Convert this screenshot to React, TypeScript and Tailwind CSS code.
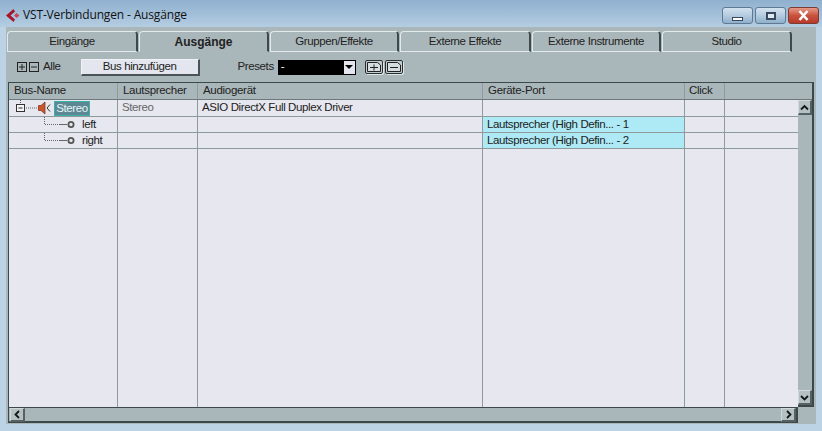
const tabs = [
  { label: 'Eingänge', w: 'w-[131px]' },
  { label: 'Ausgänge', w: 'w-[130px]', active: true },
  { label: 'Gruppen/Effekte', w: 'w-[129px]' },
  { label: 'Externe Effekte', w: 'w-[131px]' },
  { label: 'Externe Instrumente', w: 'w-[129px]' },
  { label: 'Studio', w: 'w-[130px]' },
];

const cell = 'h-full shrink-0 border-r border-[#8f9a9c] px-1 flex items-center overflow-hidden whitespace-nowrap';

function Row({ h, first, name, port, nameEl }: { h: string; first?: string; name?: string; port?: string; nameEl?: React.ReactNode }) {
  return (
    <div className={`flex shrink-0 border-b border-[#8f9a9c] ${h}`}>
      <div className={`${cell} w-[109px] !px-0`}>{nameEl}</div>
      <div className={`${cell} w-[80px] text-[#666]`}>{first}</div>
      <div className={`${cell} w-[285px]`}>{name}</div>
      <div className={`${cell} w-[202px] !px-0 ${port ? 'bg-[#aeeaf6]' : ''}`}>
        {port && <span className="pl-1">{port}</span>}
      </div>
      <div className={`${cell} w-[40px]`} />
      <div className="flex-1" />
    </div>
  );
}

function ChildName({ label }: { label: string }) {
  return (
    <div className="relative h-full w-full">
      <svg width="70" height="16" className="absolute left-0 top-0">
        <path d="M35.5 0V7.5H51" stroke="#666" strokeDasharray="1 1" fill="none" />
        <path d="M51 7.5H58" stroke="#666" fill="none" />
        <circle cx="62" cy="7.5" r="2.6" fill="none" stroke="#555" strokeWidth="1.8" />
      </svg>
      <span className="absolute left-[73px] top-0 leading-[15px]">{label}</span>
    </div>
  );
}

function BoxIcon({ plus }: { plus?: boolean }) {
  return (
    <svg width="10" height="10" viewBox="0 0 10 10">
      <rect x="0.5" y="0.5" width="9" height="9" fill="none" stroke="#222" />
      <path d={plus ? 'M2 5H8M5 2V8' : 'M2 5H8'} stroke="#222" />
    </svg>
  );
}

function PresetIcon({ plus }: { plus?: boolean }) {
  return (
    <div className="flex h-[14px] w-[18px] items-center justify-center rounded-[2px] border border-[#2a3030] bg-[#c2cdcf] shadow-[1px_1px_0_#dfe6e6]">
      <svg width="14" height="10" viewBox="0 0 14 10">
        <path d="M0.5 9.5V0.5H10.5L13.5 3V9.5Z" fill="#d5dddf" stroke="#222" />
        <path d={plus ? 'M3 5.5H11M7 2.5V8.5' : 'M3 5.5H11'} stroke="#222" />
      </svg>
    </div>
  );
}

function ScrollBtn({ d, className }: { d: string; className: string }) {
  return (
    <div className={`flex shrink-0 items-center justify-center border-l border-t border-r-2 border-b-2 border-l-[#d0d8d9] border-t-[#d0d8d9] border-r-[#566163] border-b-[#566163] bg-[#b5c0c3] ${className}`}>
      <svg width="9" height="9" viewBox="0 0 9 9">
        <path d={d} fill="none" stroke="#10181c" strokeWidth="1.8" />
      </svg>
    </div>
  );
}

export default function App() {
  return (
    <div className="flex h-[431px] w-[822px] flex-col overflow-hidden bg-[#bcd3e6] font-['Liberation_Sans',sans-serif] text-[11.5px] tracking-[-0.4px] text-[#222]">
      {/* title bar */}
      <div className="flex h-[27px] shrink-0 items-center bg-gradient-to-b from-[#8fb0cf] to-[#b4cde2] pl-[5px] pt-[3px]">
        <svg width="15" height="15" viewBox="0 0 15 15" className="mr-[3px]">
          <path d="M8.5 1L1 7.5L8.5 14L10 11.5L5.5 7.5L10 3.5Z" fill="#a5152c" />
          <path d="M11.5 5L14.5 7.5L11.5 10L9 7.5Z" fill="#c2485c" />
        </svg>
        <span className="font-['Open_Sans',sans-serif] text-[12px] tracking-[-0.15px] text-[#111]">VST-Verbindungen - Ausgänge</span>
        <div className="ml-auto mr-[3px] mt-[1px] flex gap-[2px]">
          <div className="flex h-[17px] w-[31px] items-end justify-center rounded-[3px] border border-[#5f7990] bg-gradient-to-b from-[#d3e2ef] via-[#b4cbdf] to-[#8fb0cc] pb-[2px]">
            <div className="h-[4px] w-[11px] border border-[#38485a] bg-white" />
          </div>
          <div className="flex h-[17px] w-[31px] items-center justify-center rounded-[3px] border border-[#5f7990] bg-gradient-to-b from-[#d3e2ef] via-[#b4cbdf] to-[#8fb0cc]">
            <div className="h-[8px] w-[10px] border-2 border-[#38485a] bg-[#dce8f2]" />
          </div>
          <div className="flex h-[17px] w-[31px] items-center justify-center rounded-[3px] border border-[#7d3a32] bg-gradient-to-b from-[#e59a88] via-[#c9523f] to-[#b8392a]">
            <svg width="13" height="11" viewBox="0 0 13 11">
              <path d="M2.5 1L10.5 10M10.5 1L2.5 10" stroke="#fff" strokeWidth="2.6" />
            </svg>
          </div>
        </div>
      </div>

      {/* window body */}
      <div className="ml-[6px] mr-[6px] mb-[7px] flex min-h-0 flex-1 flex-col bg-[#aab7ba] pl-[1px]">
        {/* tabs */}
        <div className="flex h-[25px] shrink-0 items-end">
          {tabs.map((t) => (
            <div
              key={t.label}
              className={`mr-[1px] flex shrink-0 items-center justify-center rounded-t-[4px] border-l border-t border-r-2 border-l-[#e4eaea] border-t-[#e4eaea] border-r-[#3f494b] ${t.w} ${
                t.active
                  ? 'h-[21px] border-b border-b-[#aab7ba] bg-[#aab7ba] text-[12px] font-bold tracking-normal'
                  : 'h-[21px] border-b border-b-[#e4eaea]'
              }`}
            >
              {t.label}
            </div>
          ))}
        </div>

        {/* toolbar */}
        <div className="flex h-[30px] shrink-0 items-center">
          <div className="ml-[10px] flex gap-[2px]">
            <BoxIcon plus />
            <BoxIcon />
          </div>
          <span className="ml-[4px]">Alle</span>
          <button className="ml-[20px] h-[17px] w-[119px] border-l border-t border-r-2 border-b-2 border-l-[#f0f3f3] border-t-[#f0f3f3] border-r-[#4a5456] border-b-[#4a5456] bg-[#e3e6ee] leading-none">
            Bus hinzufügen
          </button>
          <span className="ml-[38px]">Presets</span>
          <div className="ml-[4px] flex h-[15px] w-[78px] items-center justify-between bg-black pl-[3px] text-white">
            <span className="leading-none">-</span>
            <div className="mr-[1px] flex h-[13px] w-[11px] items-center justify-center bg-[#e3e6ee]">
              <div className="h-0 w-0 border-x-[4px] border-t-[4px] border-x-transparent border-t-black" />
            </div>
          </div>
          <div className="ml-[9px] flex gap-[2px]">
            <PresetIcon plus />
            <PresetIcon />
          </div>
        </div>

        {/* table */}
        <div className="flex min-h-0 flex-1 pl-[1px]">
          <div className="mb-[1px] flex w-[790px] shrink-0 flex-col border-l border-t border-[#3d484a]">
            <div className="flex h-[17px] shrink-0 border-b border-[#6d787a] tracking-[-0.3px]">
              <div className={`${cell} w-[109px] !pl-[5px]`}>Bus-Name</div>
              <div className={`${cell} w-[80px] !pl-[5px]`}>Lautsprecher</div>
              <div className={`${cell} w-[285px] !pl-[5px]`}>Audiogerät</div>
              <div className={`${cell} w-[202px] !pl-[5px]`}>Geräte-Port</div>
              <div className={`${cell} w-[40px]`}>Click</div>
              <div className="flex-1" />
            </div>
            <div className="flex min-h-0 flex-1 flex-col bg-[#e7e7ef]">
              <Row
                h="h-[17px]"
                first="Stereo"
                name="ASIO DirectX Full Duplex Driver"
                nameEl={
                  <div className="relative h-full w-full">
                    <svg width="46" height="16" className="absolute left-0 top-0">
                      <rect x="7.5" y="4.5" width="8" height="7" fill="#f4f4f8" stroke="#333" />
                      <path d="M9.5 8H13.5" stroke="#222" />
                      <path d="M11.5 0V4" stroke="#555" strokeDasharray="1 1" />
                      <path d="M17 8H28" stroke="#666" strokeDasharray="1 1" />
                      <path d="M29.5 5.5H32L36 2V14L32 10.5H29.5Z" fill="#c9562a" stroke="#7a2a14" strokeWidth="0.7" />
                      <path d="M38 8L41 4.5M38 8L41 11.5" stroke="#333" />
                    </svg>
                    <span className="absolute left-[45px] top-[1px] flex h-[15px] w-[36px] items-center justify-center border border-[#3fb0a8] bg-[#5b8893] text-[#e7f4f6]">
                      Stereo
                    </span>
                  </div>
                }
              />
              <Row h="h-[16px]" nameEl={<ChildName label="left" />} port="Lautsprecher (High Defin... - 1" />
              <Row h="h-[16px]" nameEl={<ChildName label="right" />} port="Lautsprecher (High Defin... - 2" />
              <div className="flex min-h-0 flex-1">
                <div className={`${cell} w-[109px]`} />
                <div className={`${cell} w-[80px]`} />
                <div className={`${cell} w-[285px]`} />
                <div className={`${cell} w-[202px]`} />
                <div className={`${cell} w-[40px]`} />
                <div className="flex-1" />
              </div>
            </div>
            {/* horizontal scrollbar */}
            <div className="flex h-[16px] shrink-0 border-t border-b-2 border-r-2 border-[#3d484a] pl-[1px]">
              <ScrollBtn d="M6 1L2.5 4.5L6 8" className="h-[14px] w-[15px]" />
              <div className="flex-1" />
              <ScrollBtn d="M3 1L6.5 4.5L3 8" className="h-[14px] w-[15px]" />
            </div>
          </div>
          {/* vertical scrollbar */}
          <div className="mb-[17px] flex w-[16px] shrink-0 flex-col border-t border-r-2 border-b-2 border-[#3d484a]">
            <div className="h-[17px] shrink-0 border-b border-[#6d787a]" />
            <ScrollBtn d="M1 6.5L4.5 3L8 6.5" className="h-[15px] w-[14px]" />
            <div className="flex-1" />
            <ScrollBtn d="M1 3L4.5 6.5L8 3" className="h-[15px] w-[14px]" />
          </div>
        </div>
      </div>
    </div>
  );
}
